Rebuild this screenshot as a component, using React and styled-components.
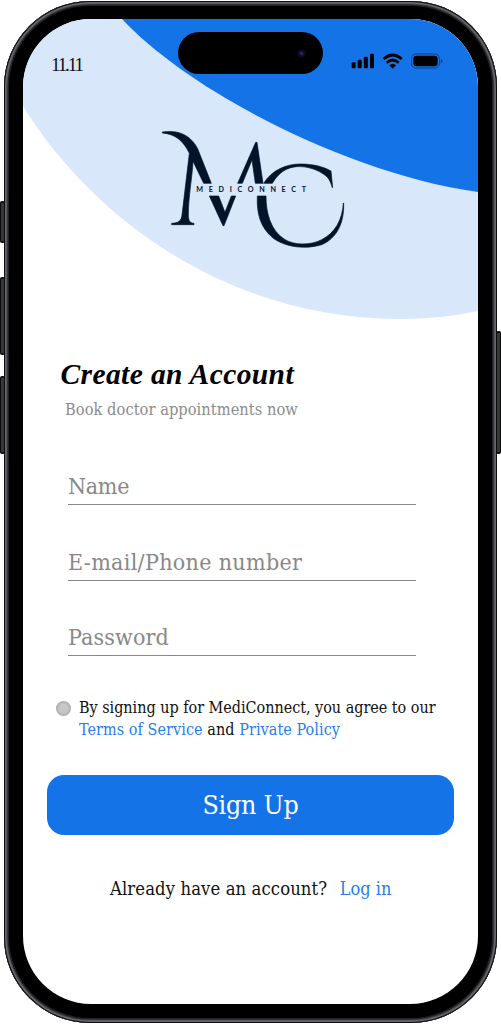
import React from "react";
import styled, { createGlobalStyle } from "styled-components";

const serif = `"DejaVu Serif Condensed", "DejaVu Serif", serif`;
const blue = "#1473e6";

const GlobalStyle = createGlobalStyle`
  *, *::before, *::after { box-sizing: border-box; }
  body { margin: 0; background: #fff; }
`;

const Stage = styled.main`
  position: relative;
  width: 501px;
  height: 1024px;
  padding: 1px 4px;
  overflow: hidden;
`;

const SideKey = styled.i`
  position: absolute;
  top: ${(p) => p.$top}px;
  ${(p) => p.$side}: 0;
  width: 5px;
  height: ${(p) => p.$height}px;
  border: 1px solid #0b0b0c;
  border-width: 2px 1px;
  border-radius: 2px;
  background: #33383b;
`;

const Body = styled.div`
  position: relative;
  width: 493px;
  height: 1022px;
  padding: 18px 19px;
  border-radius: 86px;
  background: #000;
  box-shadow: inset 0 0 0 1px #0c0c0c, inset 0 0 0 2.5px #66686c,
    inset 0 0 0 3.5px #4a4b50, inset 0 0 0 5px #202122;
`;

const Screen = styled.div`
  position: relative;
  display: flex;
  flex-direction: column;
  width: 455px;
  height: 985px;
  border-radius: 68px;
  overflow: hidden;
  background: #fff;
  font-family: ${serif};
  color: #111;
`;

const Waves = styled.svg`
  position: absolute;
  inset: 0 auto auto 0;
`;

const StatusBar = styled.header`
  position: relative;
  display: flex;
  justify-content: space-between;
  height: 90px;
  padding: 0 35px 0 28px;
`;

const Clock = styled.span`
  padding-top: 35px;
  font: 19px/22px "Liberation Serif", serif;
  letter-spacing: -2.1px;
`;

const Island = styled.div`
  position: absolute;
  top: 13px;
  left: 155px;
  width: 145px;
  height: 42px;
  border-radius: 21px;
  background: #000;
`;

const Lens = styled.i`
  position: absolute;
  top: 17px;
  right: 17px;
  width: 9px;
  height: 9px;
  border-radius: 50%;
  background: radial-gradient(circle, #292772 0 10%, #0d0c2b 40%, #050508 75%);
`;

const StatusIcons = styled.svg`
  margin-top: 34px;
  flex: none;
`;

const Logo = styled.svg`
  position: relative;
  flex: none;
  margin: 11px 0 0 127px;
`;

const Title = styled.h1`
  margin: 95px 0 0 37.5px;
  font: italic bold 29.5px/38px "Liberation Serif", serif;
  letter-spacing: 0.4px;
  color: #000;
  white-space: nowrap;
`;

const Subtitle = styled.p`
  margin: 6px 0 0 42px;
  font-size: 16.3px;
  line-height: 22px;
  color: #8c8c8c;
  white-space: nowrap;
  letter-spacing: 0.04px;
`;

const Form = styled.form`
  display: flex;
  flex-direction: column;
  margin-top: 9px;
`;

const Field = styled.label`
  display: flex;
  align-items: flex-end;
  width: 348px;
  height: 75.3px;
  margin-left: 45px;
  padding-bottom: 3px;
  border-bottom: 1px solid #888;
  font-size: 23px;
  line-height: 30px;
  color: #888;
  letter-spacing: ${(p) => p.$track}px;
`;

const Terms = styled.div`
  display: flex;
  gap: 8px;
  margin: 41px 0 0 33px;
  font-size: 16px;
  line-height: 22px;
  white-space: nowrap;
`;

const Radio = styled.i`
  width: 15px;
  height: 15px;
  margin-top: 4px;
  border-radius: 50%;
  background: radial-gradient(circle, #c8c6c7 0 40%, #a9a9a9 72%);
`;

const Line = styled.div`
  letter-spacing: ${(p) => p.$track}px;
`;

const Link = styled.a`
  color: #2680eb;
`;

const Submit = styled.button`
  width: 407px;
  height: 60px;
  margin: 34px 0 0 24px;
  padding: 0;
  border: 0;
  border-radius: 17px;
  background: ${blue};
  color: #fff;
  font: 26.5px/60px ${serif};
  letter-spacing: -0.2px;
`;

const Login = styled.p`
  display: flex;
  gap: 12.5px;
  margin: 42px 0 0 87px;
  font-size: 18px;
  line-height: 24px;
  white-space: nowrap;
`;

const Question = styled.span`
  font-size: 18.3px;
  letter-spacing: 0.11px;
`;

const fields = [
  { label: "Name", track: -0.3 },
  { label: "E-mail/Phone number", track: 0.32 },
  { label: "Password", track: 0.15 },
];

export default function App() {
  return (
    <Stage>
      <GlobalStyle />
      <SideKey $side="left" $top={201} $height={42} />
      <SideKey $side="left" $top={277} $height={78} />
      <SideKey $side="left" $top={376} $height={78} />
      <SideKey $side="right" $top={331} $height={123} />
      <Body>
        <Screen>
          <Waves width="455" height="310" viewBox="23 19 455 310">
            <path d="M23 19H478V311Q440 319 400 319C230 319 93 220 23 106Z" fill="#d9e7fb" />
            <path d="M122 19H478V192C345 173 188 90 122 19Z" fill={blue} />
          </Waves>
          <StatusBar>
            <Clock>11.11</Clock>
            <Island>
              <Lens />
            </Island>
            <StatusIcons width="92" height="17" viewBox="304 160 276 51">
              <rect x="306" y="188" width="12" height="18" rx="3" />
              <rect x="324" y="180" width="12" height="26" rx="3" />
              <rect x="342.500" y="171" width="12" height="35" rx="3" />
              <rect x="361" y="162" width="12" height="44" rx="3" />
              <g fill="none" stroke="#000" strokeWidth="8">
                <path d="M401.500 178Q429 154 456.500 178" />
                <path d="M411 189Q429 173 447 189" />
              </g>
              <path d="M419 197Q429 188 439 197L429 207Z" />
              <rect x="485.500" y="163" width="84" height="42" rx="13" fill="none" stroke="#0b438a" strokeWidth="3" />
              <rect x="491" y="168" width="73" height="32" rx="9" />
              <path d="M573 178Q579 179 579 184T573 191Z" fill="#0b438a" />
            </StatusIcons>
          </StatusBar>
          <Logo width="210" height="140" viewBox="0 0 630 420" fill="#031329">
            <g stroke="#031329" strokeWidth="2">
              <path d="M37 36C75 30 118 38 143 86L184 190H161L129 124C127 170 115 230 115 285C115 305 122 309 132 310V314H65V310C85 309 94 303 96 285L118 100C100 62 75 42 37 39Z" />
              <path d="M263 190L317 67H321L339 190H316L306 120L277 190Z" />
              <path d="M178 228H206L225 277L244 228H257L222 317H219Z" />
              <path d="M341 190C365 150 410 132 450 132C490 132 520 140 543 153L548 203H547C540 180 535 172 520 162C490 142 460 139 440 140C410 142 385 158 367 190Z" />
              <path d="M322 228H348C348 280 362 330 402 357C430 376 480 377 515 359C555 339 577 300 580 249H581C583 310 560 355 515 374C470 388 410 384 370 355C330 322 320 280 322 228Z" />
            </g>
            <text x="139" y="215" fontFamily="Lato, sans-serif" fontWeight="700" fontSize="21.500" textLength="329" lengthAdjust="spacing">
              MEDICONNECT
            </text>
          </Logo>
          <Title>Create an Account</Title>
          <Subtitle>Book doctor appointments now</Subtitle>
          <Form onSubmit={(e) => e.preventDefault()}>
            {fields.map((f) => (
              <Field key={f.label} $track={f.track}>
                {f.label}
              </Field>
            ))}
            <Terms>
              <Radio />
              <div>
                <Line $track={-0.02}>By signing up for MediConnect, you agree to our</Line>
                <Line $track={0.07}>
                  <Link>Terms of Service</Link> and <Link>Private Policy</Link>
                </Line>
              </div>
            </Terms>
            <Submit>Sign Up</Submit>
          </Form>
          <Login>
            <Question>Already have an account?</Question>
            <Link>Log in</Link>
          </Login>
        </Screen>
      </Body>
    </Stage>
  );
}
